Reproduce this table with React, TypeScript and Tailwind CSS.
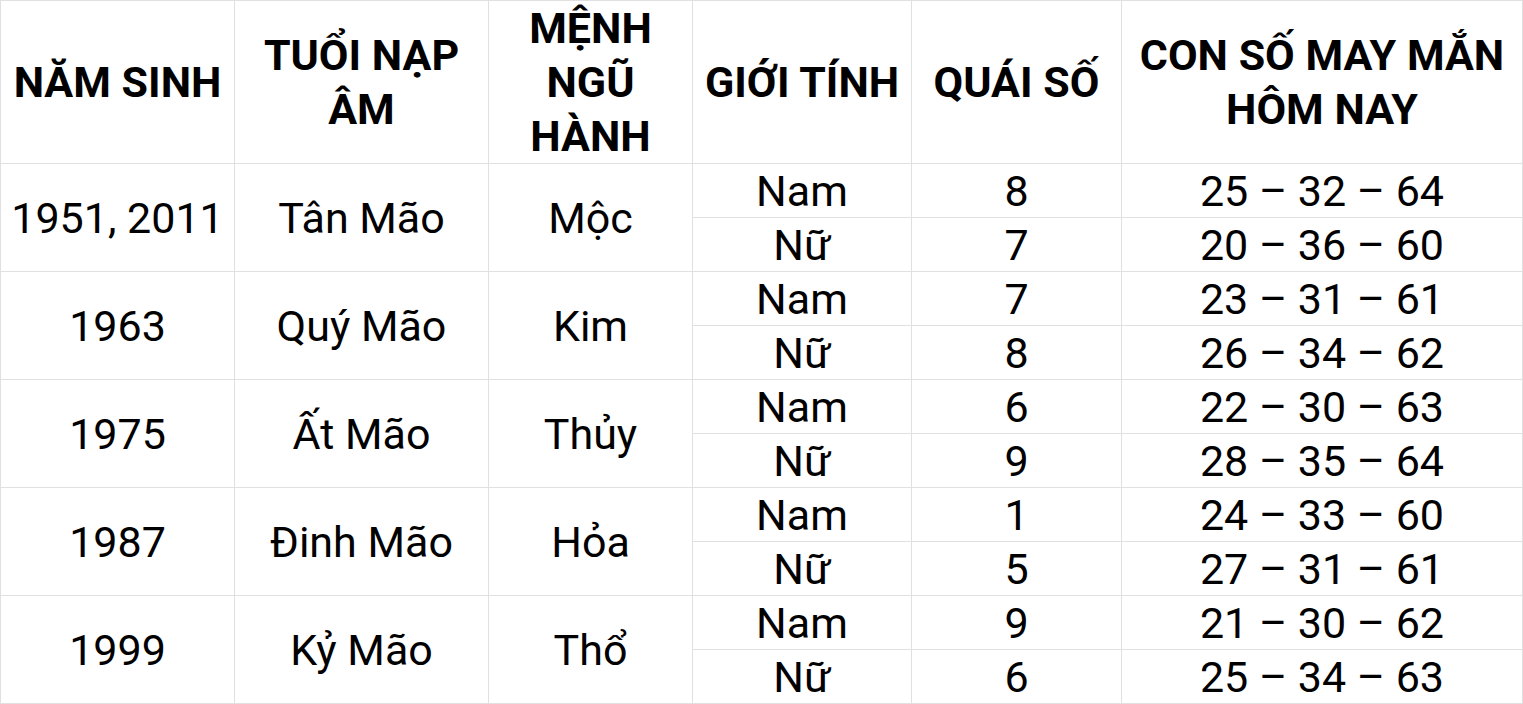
import React from 'react';

type Group = {
  year: string;
  napAm: string;
  menh: string;
  rows: { gender: string; quai: string; lucky: string }[];
};

const groups: Group[] = [
  {
    year: '1951, 2011',
    napAm: 'Tân Mão',
    menh: 'Mộc',
    rows: [
      { gender: 'Nam', quai: '8', lucky: '25 – 32 – 64' },
      { gender: 'Nữ', quai: '7', lucky: '20 – 36 – 60' },
    ],
  },
  {
    year: '1963',
    napAm: 'Quý Mão',
    menh: 'Kim',
    rows: [
      { gender: 'Nam', quai: '7', lucky: '23 – 31 – 61' },
      { gender: 'Nữ', quai: '8', lucky: '26 – 34 – 62' },
    ],
  },
  {
    year: '1975',
    napAm: 'Ất Mão',
    menh: 'Thủy',
    rows: [
      { gender: 'Nam', quai: '6', lucky: '22 – 30 – 63' },
      { gender: 'Nữ', quai: '9', lucky: '28 – 35 – 64' },
    ],
  },
  {
    year: '1987',
    napAm: 'Đinh Mão',
    menh: 'Hỏa',
    rows: [
      { gender: 'Nam', quai: '1', lucky: '24 – 33 – 60' },
      { gender: 'Nữ', quai: '5', lucky: '27 – 31 – 61' },
    ],
  },
  {
    year: '1999',
    napAm: 'Kỷ Mão',
    menh: 'Thổ',
    rows: [
      { gender: 'Nam', quai: '9', lucky: '21 – 30 – 62' },
      { gender: 'Nữ', quai: '6', lucky: '25 – 34 – 63' },
    ],
  },
];

const th = 'border border-[#e0e0e0] font-bold text-center align-middle p-0 leading-[54px]';
const td = 'border border-[#e0e0e0] text-center align-middle p-0 h-[54px] leading-[52px]';

const App: React.FC = () => {
  return (
    <div className="w-[1523px] h-[704px] bg-white overflow-hidden font-['Roboto',sans-serif] text-black text-[43px]">
      <table className="border-collapse table-fixed w-[1523px]">
        <colgroup>
          <col className="w-[234px]" />
          <col className="w-[254px]" />
          <col className="w-[204px]" />
          <col className="w-[219px]" />
          <col className="w-[210px]" />
          <col />
        </colgroup>
        <thead>
          <tr className="h-[163px]">
            <th className={th}>NĂM SINH</th>
            <th className={th}>
              TUỔI NẠP
              <br />
              ÂM
            </th>
            <th className={th}>
              MỆNH
              <br />
              NGŨ
              <br />
              HÀNH
            </th>
            <th className={th}>GIỚI TÍNH</th>
            <th className={th}>QUÁI SỐ</th>
            <th className={th}>
              CON SỐ MAY MẮN
              <br />
              HÔM NAY
            </th>
          </tr>
        </thead>
        <tbody>
          {groups.map((g) =>
            g.rows.map((r, i) => (
              <tr key={g.year + r.gender} className="h-[54px]">
                {i === 0 && (
                  <>
                    <td rowSpan={2} className={td}>{g.year}</td>
                    <td rowSpan={2} className={td}>{g.napAm}</td>
                    <td rowSpan={2} className={td}>{g.menh}</td>
                  </>
                )}
                <td className={td}>{r.gender}</td>
                <td className={td}>{r.quai}</td>
                <td className={td}>{r.lucky}</td>
              </tr>
            ))
          )}
        </tbody>
      </table>
    </div>
  );
};

export default App;
